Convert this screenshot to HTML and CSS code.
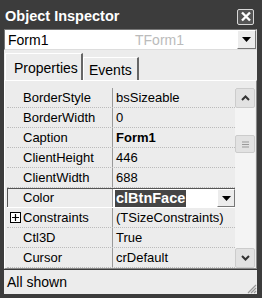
FILE: index.html
```html
<!DOCTYPE html>
<html>
<head>
<meta charset="utf-8">
<link rel="stylesheet" href="styles.css">
</head>
<body>
<div class="window">
  <div class="titlebar">
    <span class="title">Object Inspector</span>
    <span class="close"><svg width="12" height="11" viewBox="0 0 12 11"><path d="M2 1.5 L10 9.5 M10 1.5 L2 9.5" stroke="#fff" stroke-width="2.4"/></svg></span>
  </div>
  <div class="combo">
    <span class="combo-name">Form1</span>
    <span class="combo-type">TForm1</span>
    <span class="dropbtn"><svg width="9" height="5" viewBox="0 0 9 5"><path d="M0 0 H9 L4.5 5 Z" fill="#000"/></svg></span>
  </div>
  <div class="tabs">
    <div class="tab active">Properties</div>
    <div class="tab">Events</div>
  </div>
  <div class="panel">
    <div class="grid">
      <div class="row"><div class="name">BorderStyle</div><div class="val">bsSizeable</div></div>
      <div class="row"><div class="name">BorderWidth</div><div class="val">0</div></div>
      <div class="row"><div class="name">Caption</div><div class="val bold">Form1</div></div>
      <div class="row"><div class="name">ClientHeight</div><div class="val">446</div></div>
      <div class="row"><div class="name">ClientWidth</div><div class="val">688</div></div>
      <div class="row selected"><div class="name">Color</div><div class="val edit"><span class="hl">clBtnFace</span><span class="editdrop"><svg width="9" height="5" viewBox="0 0 9 5"><path d="M0 0 H9 L4.5 5 Z" fill="#000"/></svg></span></div></div>
      <div class="row"><div class="name plus"><span class="expander"><svg width="9" height="9" viewBox="0 0 9 9"><path d="M1 4.5H8M4.5 1V8" stroke="#000" stroke-width="1.2"/></svg></span>Constraints</div><div class="val">(TSizeConstraints)</div></div>
      <div class="row"><div class="name">Ctl3D</div><div class="val">True</div></div>
      <div class="row"><div class="name">Cursor</div><div class="val">crDefault</div></div>
    </div>
    <div class="scrollbar">
      <div class="sbtn"><svg width="9" height="6" viewBox="0 0 9 6"><path d="M1 5 L4.5 1.5 L8 5" fill="none" stroke="#333" stroke-width="2"/></svg></div>
      <div class="track">
        <div class="thumb"><svg width="7" height="7" viewBox="0 0 7 7"><path d="M0 1H7M0 3.5H7M0 6H7" stroke="#999" stroke-width="1"/></svg></div>
      </div>
      <div class="sbtn"><svg width="9" height="6" viewBox="0 0 9 6"><path d="M1 1 L4.5 4.5 L8 1" fill="none" stroke="#333" stroke-width="2"/></svg></div>
    </div>
  </div>
  <div class="status">
    <span>All shown</span>
    <svg class="grip" width="12" height="12" viewBox="0 0 12 12"><path d="M11 3 L3 11 M11 6 L6 11 M11 9 L9 11" stroke="#999" stroke-width="1.2"/></svg>
  </div>
</div>
</body>
</html>
```
FILE: styles.css
```css
* { box-sizing: border-box; }
html, body { margin: 0; padding: 0; }
body {
  width: 262px;
  height: 298px;
  background: #3c3c3c;
  font-family: "Liberation Sans", Arial, sans-serif;
  font-size: 13px;
  color: #000;
  overflow: hidden;
}
.window {
  width: 262px;
  height: 298px;
  padding: 0 5px 4px 4px;
  display: flex;
  flex-direction: column;
  background: #3c3c3c;
}
.titlebar {
  height: 28px;
  display: flex;
  align-items: center;
  justify-content: space-between;
  padding: 3px 0 0 1px;
}
.title {
  color: #fff;
  font-weight: bold;
  font-size: 14.5px;
}
.close {
  width: 17px;
  height: 16px;
  border: 1px solid #d8d8d8;
  border-radius: 2px;
  background: #555;
  display: flex;
  align-items: center;
  justify-content: center;
  margin-right: 3px;
  margin-top: 2px;
}
.combo {
  height: 21px;
  margin-top: 1px;
  background: #fff;
  border: 1px solid #777;
  border-right-color: #ddd;
  border-bottom-color: #ddd;
  display: flex;
  align-items: center;
  padding-left: 3px;
}
.combo-name { width: 127px; font-size: 14px; }
.combo-type { color: #bbb; font-size: 14px; flex: 1; }
.dropbtn {
  width: 19px;
  height: 19px;
  background: #ececec;
  border: 1px solid #fff;
  border-right-color: #777;
  border-bottom-color: #777;
  display: flex;
  align-items: center;
  justify-content: center;
}
.tabs {
  height: 30px;
  background: #ececec;
  display: flex;
  align-items: flex-end;
  padding-left: 1px;
}
.tab {
  height: 23px;
  padding: 4px 5px 0 5px;
  border: 1px solid #fff;
  border-right: 2px solid #666;
  border-bottom: none;
  font-size: 14px;
  background: #ececec;
}
.tab.active {
  height: 27px;
  padding: 6px 6px 0 8px;
  width: 78px;
}
.panel {
  flex: 1;
  background: #ececec;
  display: flex;
  padding: 7px 1px 0 2px;
  border-left: 1px solid #fff;
  border-top: 1px solid #fff;
  border-right: 1px solid #888;
  border-bottom: 1px solid #888;
}
.grid {
  flex: 1;
  display: flex;
  flex-direction: column;
}
.row {
  height: 20px;
  display: flex;
  border-bottom: 1px dotted #bbb;
}
.name {
  width: 106px;
  padding-left: 16px;
  border-right: 1px solid #999;
  line-height: 19px;
  white-space: nowrap;
}
.val {
  flex: 1;
  padding-left: 3px;
  line-height: 19px;
  white-space: nowrap;
  overflow: hidden;
}
.bold { font-weight: bold; }
.row.selected {
  border-top: 1px solid #555;
  border-bottom: 1px solid #fff;
}
.row.selected .name { border-left: 1px solid #555; padding-left: 15px; line-height: 18px; }
.val.edit {
  background: #fff;
  display: flex;
  align-items: center;
  padding-left: 2px;
}
.hl {
  background: #454545;
  color: #fff;
  font-weight: bold;
  font-size: 14.5px;
  line-height: 17px;
  padding: 0 1px;
}
.editdrop {
  margin-left: auto;
  width: 18px;
  height: 18px;
  background: #ececec;
  border: 1px solid #fff;
  border-right-color: #777;
  border-bottom-color: #777;
  display: flex;
  align-items: center;
  justify-content: center;
}
.name.plus { padding-left: 3px; display: flex; align-items: center; }
.expander {
  width: 11px;
  height: 11px;
  border: 1px solid #000;
  display: flex;
  align-items: center;
  justify-content: center;
  margin-right: 2px;
  background: #fff;
}
.scrollbar {
  width: 20px;
  display: flex;
  flex-direction: column;
  background: #f4f4f4;
}
.sbtn {
  height: 20px;
  background: #e2e2e2;
  border: 1px solid #ccc;
  border-radius: 2px;
  display: flex;
  align-items: center;
  justify-content: center;
}
.track {
  flex: 1;
  padding-top: 27px;
}
.thumb {
  height: 18px;
  background: #e2e2e2;
  border: 1px solid #ccc;
  border-radius: 2px;
  display: flex;
  align-items: center;
  justify-content: center;
}
.status {
  height: 24px;
  margin-top: 1px;
  background: #ececec;
  display: flex;
  align-items: center;
  justify-content: space-between;
  padding-left: 3px;
  font-size: 14px;
}
.grip { align-self: flex-end; }
```
